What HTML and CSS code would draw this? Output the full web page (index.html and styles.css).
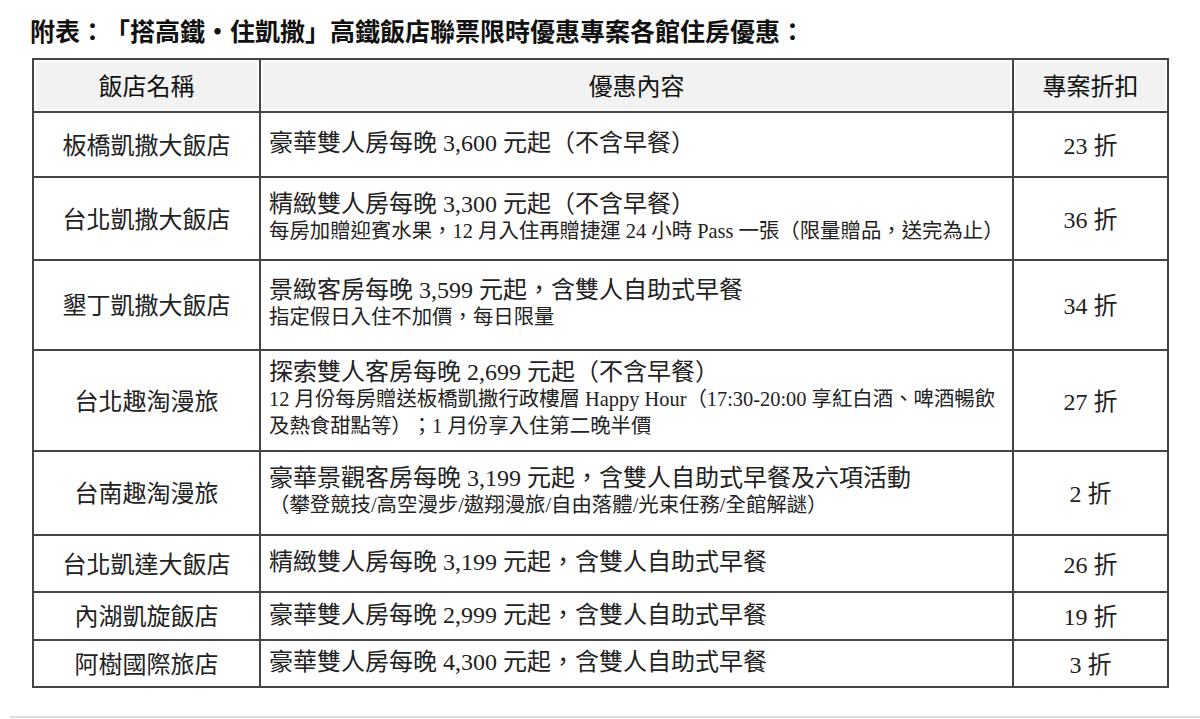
FILE: index.html
```html
<!DOCTYPE html>
<html lang="zh-Hant">
<head>
<meta charset="utf-8">
<title>附表</title>
<link rel="stylesheet" href="styles.css">
</head>
<body>
<div class="page">
  <h2 class="title">附表：「搭高鐵・住凱撒」高鐵飯店聯票限時優惠專案各館住房優惠：</h2>
  <table class="offers">
    <colgroup>
      <col class="c-name">
      <col class="c-desc">
      <col class="c-disc">
    </colgroup>
    <thead>
      <tr class="h53">
        <th>飯店名稱</th>
        <th>優惠內容</th>
        <th>專案折扣</th>
      </tr>
    </thead>
    <tbody>
      <tr class="h65">
        <td class="name">板橋凱撒大飯店</td>
        <td class="desc"><div class="main">豪華雙人房每晚 3,600 元起（不含早餐）</div></td>
        <td class="disc">23 折</td>
      </tr>
      <tr class="h83">
        <td class="name">台北凱撒大飯店</td>
        <td class="desc"><div class="main">精緻雙人房每晚 3,300 元起（不含早餐）</div><div class="sub">每房加贈迎賓水果，12 月入住再贈捷運 24 小時 Pass 一張（限量贈品，送完為止）</div></td>
        <td class="disc">36 折</td>
      </tr>
      <tr class="h90">
        <td class="name">墾丁凱撒大飯店</td>
        <td class="desc"><div class="main">景緻客房每晚 3,599 元起，含雙人自助式早餐</div><div class="sub">指定假日入住不加價，每日限量</div></td>
        <td class="disc">34 折</td>
      </tr>
      <tr class="h101">
        <td class="name">台北趣淘漫旅</td>
        <td class="desc"><div class="main">探索雙人客房每晚 2,699 元起（不含早餐）</div><div class="sub">12 月份每房贈送板橋凱撒行政樓層 Happy Hour（17:30-20:00 享紅白酒、啤酒暢飲<br>及熱食甜點等）；1 月份享入住第二晚半價</div></td>
        <td class="disc">27 折</td>
      </tr>
      <tr class="h84">
        <td class="name">台南趣淘漫旅</td>
        <td class="desc"><div class="main">豪華景觀客房每晚 3,199 元起，含雙人自助式早餐及六項活動</div><div class="sub">（攀登競技/高空漫步/遨翔漫旅/自由落體/光束任務/全館解謎）</div></td>
        <td class="disc">2 折</td>
      </tr>
      <tr class="h57">
        <td class="name">台北凱達大飯店</td>
        <td class="desc"><div class="main">精緻雙人房每晚 3,199 元起，含雙人自助式早餐</div></td>
        <td class="disc">26 折</td>
      </tr>
      <tr class="h48">
        <td class="name">內湖凱旋飯店</td>
        <td class="desc"><div class="main">豪華雙人房每晚 2,999 元起，含雙人自助式早餐</div></td>
        <td class="disc">19 折</td>
      </tr>
      <tr class="h47">
        <td class="name">阿樹國際旅店</td>
        <td class="desc"><div class="main">豪華雙人房每晚 4,300 元起，含雙人自助式早餐</div></td>
        <td class="disc">3 折</td>
      </tr>
    </tbody>
  </table>
</div>
<div class="divider"></div>
</body>
</html>
```
FILE: styles.css
```css
html, body {
  margin: 0;
  padding: 0;
  background: #ffffff;
}

body {
  font-family: "Liberation Serif", "Noto Sans CJK TC", serif;
  color: #1a1a1a;
  width: 1200px;
  height: 719px;
  position: relative;
  overflow: hidden;
  text-spacing-trim: space-all;
}

.page {
  padding: 19px 0 0 32px;
}

.title {
  margin: 0 0 11px -2px;
  font-size: 25px;
  line-height: 28px;
  font-weight: bold;
  color: #111;
  letter-spacing: 0;
  text-spacing-trim: space-all;
}

.offers {
  border-collapse: collapse;
  width: 1135px;
  table-layout: fixed;
  border: 2px solid #444;
}

.c-name { width: 227px; }
.c-desc { width: 753px; }
.c-disc { width: 155px; }

.offers th,
.offers td {
  border: 2px solid #444;
  padding: 0 0 3px 0;
  vertical-align: middle;
}

.offers th {
  background: #f2f2f2;
  font-weight: normal;
  font-size: 24px;
  color: #111;
  text-align: center;
  box-shadow: inset 0 0 0 2px #fbfbfb;
  padding-bottom: 2px;
}

.name {
  text-align: center;
  font-size: 24px;
  color: #222;
}

.disc {
  text-align: center;
  font-size: 24px;
  color: #222;
}

.offers td.desc {
  padding-left: 8px;
  text-align: left;
  color: #222;
}

.main {
  font-size: 24px;
  line-height: 28px;
}

.sub {
  font-size: 20.4px;
  line-height: 27px;
}

.h53 { height: 53px; }
.h65 { height: 65px; }
.h83 { height: 83px; }
.h90 { height: 90px; }
.h101 { height: 101px; }
.h84 { height: 84px; }
.h57 { height: 57px; }
.h48 { height: 48px; }
.h47 { height: 47px; }

.divider {
  position: absolute;
  left: 10px;
  right: 0;
  top: 716px;
  height: 2px;
  background: #dcdcdc;
}
```
